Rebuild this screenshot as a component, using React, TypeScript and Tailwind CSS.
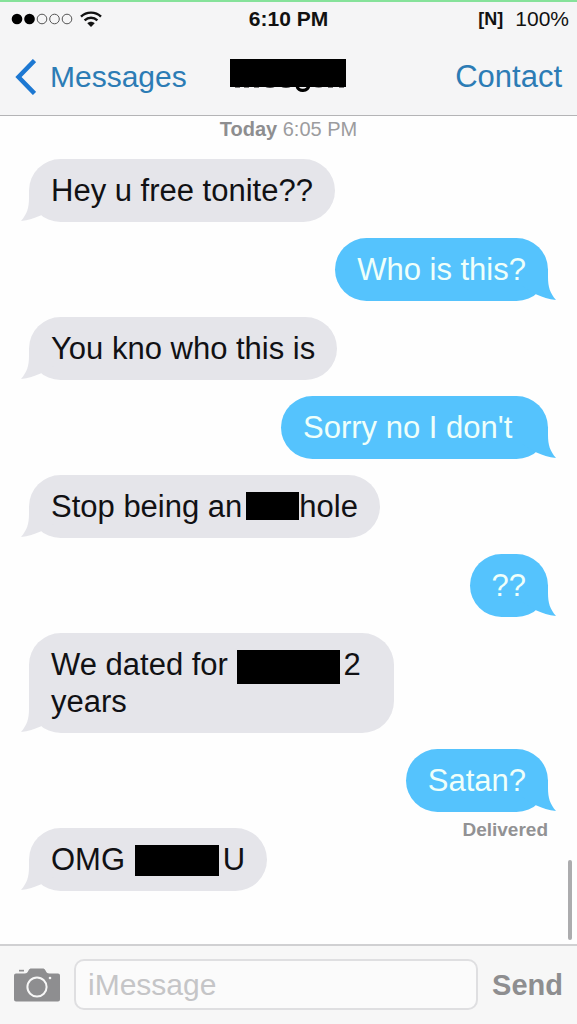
import type { ReactNode } from "react";

type Side = "in" | "out";

function Tail({ side }: { side: Side }) {
  const place =
    side === "in"
      ? "absolute bottom-0 -left-2 text-[#e5e5ea]"
      : "absolute bottom-0 -right-2 -scale-x-100 text-[#55c3fd]";
  return (
    <svg className={place} width="40" height="32" viewBox="0 0 40 32" fill="currentColor" aria-hidden="true">
      <path d="M8 0V8C8 18 6 24 0 31C7 30.500 14 28 19.500 25.500L36 16V0Z" />
    </svg>
  );
}

function Bubble({
  side,
  note,
  wide = false,
  children,
}: {
  side: Side;
  note?: string;
  wide?: boolean;
  children: ReactNode;
}) {
  const row = side === "in" ? "flex flex-col items-start" : "flex flex-col items-end";
  const skin = side === "in" ? "bg-[#e5e5ea] text-[#111114]" : "bg-[#55c3fd] text-[#effffa]";
  const width = wide ? "min-w-[267px]" : "max-w-[365px]";
  return (
    <li className={row}>
      <div className={`relative rounded-[32px] px-[22px] py-[13px] text-[31px] leading-[37px] ${width} ${skin}`}>
        <Tail side={side} />
        <p className="relative">{children}</p>
      </div>
      {note && <span className="-mb-8 pt-1 text-[19px] leading-7 font-bold text-[#929294]">{note}</span>}
    </li>
  );
}

function SignalDots() {
  return (
    <svg width="65" height="12" viewBox="-3 0 65 12" aria-label="Signal strength" role="img">
      <circle cx="6" cy="6" r="5.300" fill="#000" />
      <circle cx="18.500" cy="6" r="5.300" fill="#000" />
      <g fill="none" stroke="#555" strokeWidth="1">
        <circle cx="31" cy="6" r="4.800" />
        <circle cx="43.500" cy="6" r="4.800" />
        <circle cx="56" cy="6" r="4.800" />
      </g>
    </svg>
  );
}

function Wifi() {
  return (
    <svg width="22" height="17" viewBox="0 0 22 17" aria-label="Wi-Fi" role="img">
      <g fill="none" stroke="#111" strokeWidth="2.400">
        <path d="M1 5.600C6.500.300 15.500.300 21 5.600" />
        <path d="M4.600 9.300C8.300 5.800 13.700 5.800 17.400 9.300" />
      </g>
      <path d="M7.300 12.200C9.400 10.200 12.600 10.200 14.700 12.200L11 16Z" fill="#111" />
    </svg>
  );
}

function Camera() {
  return (
    <svg width="46" height="34" viewBox="0 0 46 34" aria-hidden="true">
      <path d="M5 1.800H10V3.500H5Z" fill="#8e8e90" />
      <path
        d="M2 5.500H10.500C13 5.500 13.500 4.500 14.500 2.500C15.200 1 16 .500 17.500.500H28.500C30 .500 30.800 1 31.500 2.500C32.500 4.500 33 5.500 35.500 5.500H44Q46 5.500 46 7.500V31.500Q46 33.500 44 33.500H2Q0 33.500 0 31.500V7.500Q0 5.500 2 5.500Z"
        fill="#8e8e90"
      />
      <circle cx="23" cy="19" r="9.600" fill="none" stroke="#f7f7f7" strokeWidth="2" />
      <circle cx="36" cy="10" r="1.300" fill="#f7f7f7" />
    </svg>
  );
}

function RedactedName() {
  return (
    <svg width="116" height="36" viewBox="0 0 116 36" role="img" aria-label="Contact name hidden">
      <rect width="116" height="28" fill="#000" />
      <path
        d="M5 27h5v1.500H5zM14 27h5v1.500h-5zM24 27h5v1.500h-5zM34 27.500h12q-6 2.500-12 0zM50 27.500h12q-6 2.500-12 0zM83 27.500h11q-5 2-11 0zM98 27h5v1.500h-5zM109 27h5v1.500h-5z"
        fill="#000"
      />
      <path d="M67 27C68 33 78 33 79 26" fill="none" stroke="#000" strokeWidth="3.200" />
    </svg>
  );
}

export default function App() {
  return (
    <div className="flex min-h-screen flex-col bg-[#fefefe] font-['Liberation_Sans',Arial,sans-serif]">
      <header className="border-t-2 border-b border-t-[#86e29a] border-b-[#b4b4b6] bg-[#f5f5f6]">
        <div className="grid h-[34px] grid-cols-[1fr_auto_1fr] items-center px-2 text-[21px] leading-6 text-[#111]">
          <div className="flex items-center gap-[7px]">
            <SignalDots />
            <Wifi />
          </div>
          <span className="font-bold">6:10 PM</span>
          <div className="flex items-center justify-end gap-3">
            <span className="text-[18px] font-bold">[N]</span>
            <span>100%</span>
          </div>
        </div>
        <div className="grid h-[79px] grid-cols-[1fr_auto_1fr] items-center pt-0.5 pr-[15px] pl-[14px] text-[30px] leading-9 text-[#2c7cb5]">
          <button type="button" className="flex items-center gap-[14px] justify-self-start">
            <svg width="22" height="36" viewBox="0 0 22 36" aria-hidden="true">
              <path d="M20.500 1.500L4.500 18L20.500 34.500" fill="none" stroke="#1d78d2" strokeWidth="4.500" />
            </svg>
            Messages
          </button>
          <RedactedName />
          <button type="button" className="justify-self-end text-[31px]">
            Contact
          </button>
        </div>
      </header>

      <main className="relative flex-1">
        <p className="pt-px text-center text-[20px] leading-6 text-[#9c9c9e]">
          <span className="font-bold text-[#8e8e90]">Today</span> 6:05 PM
        </p>
        <ul className="flex flex-col gap-4 px-[29px] pt-[18px] pb-10">
          <Bubble side="in">Hey u free tonite??</Bubble>
          <Bubble side="out">Who is this?</Bubble>
          <Bubble side="in">You kno who this is</Bubble>
          <Bubble side="out" wide>
            Sorry no I don't
          </Bubble>
          <Bubble side="in">
            Stop being an
            <span className="mt-1 ml-1 inline-block h-7 w-[53px] bg-black align-top" />
            hole
          </Bubble>
          <Bubble side="out">??</Bubble>
          <Bubble side="in">
            We dated for <span className="mt-1 mr-1 -mb-2 inline-block h-[34px] w-[103px] bg-black align-top" />
            <span>2</span> <span>years</span>
          </Bubble>
          <Bubble side="out" note="Delivered">
            Satan?
          </Bubble>
          <Bubble side="in">
            OMG <span className="mt-1 mr-1 ml-px inline-block h-[31px] w-[84px] bg-black align-top" />U
          </Bubble>
        </ul>
        <div className="absolute right-[5px] bottom-1 h-20 w-1 rounded-full bg-[#acacae]" />
      </main>

      <footer className="flex items-center gap-[14px] border-t-2 border-[#d0d0d2] bg-[#f7f7f7] px-[14px] pt-[13px] pb-[14px]">
        <button type="button" aria-label="Camera" className="shrink-0">
          <Camera />
        </button>
        <input
          type="text"
          aria-label="Message"
          placeholder="iMessage"
          className="h-[51px] min-w-0 flex-1 rounded-[10px] border-2 border-[#dfdfe1] bg-[#fbfbfb] px-3 text-[30px] text-[#111] outline-none placeholder:text-[#c5c5c7]"
        />
        <button type="button" className="text-[29px] leading-9 font-bold text-[#8e8e90]">
          Send
        </button>
      </footer>
    </div>
  );
}
